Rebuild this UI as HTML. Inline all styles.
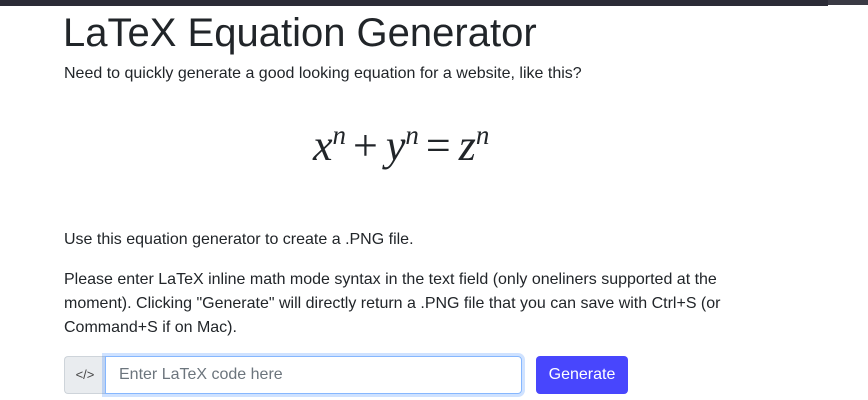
<!DOCTYPE html>
<html><head><style>
body{margin:0;width:868px;height:400px;overflow:hidden;background:#fff;font-family:"Liberation Sans",sans-serif;color:#212529;position:relative}
.bar{position:absolute;top:0;left:0;width:828px;height:6px;background:#2b2b36}
.bar2{position:absolute;top:0;left:828px;width:40px;height:5px;background:#3a3a44}
h1{position:absolute;left:63px;top:9px;margin:0;font-weight:400;font-size:40px;line-height:48px}
p{position:absolute;left:64px;margin:0;font-size:16px;line-height:24px;width:680px}
.eq{position:absolute;left:313px;top:121px;font-family:"Liberation Serif",serif;font-size:44px;line-height:50px;white-space:nowrap}
.eq i sup{font-size:27px;vertical-align:16px;line-height:0}
.eq b{font-weight:400;margin:0 8px 0 7px}
.addon{position:absolute;left:64px;top:356px;width:40px;height:36px;border:1px solid #ced4da;border-right:none;background:#e9ecef;border-radius:4px 0 0 4px;font-size:13px;text-align:center;line-height:36px;color:#444}
.inp{position:absolute;left:105px;top:356px;width:402px;height:36px;border:1px solid #86b7fe;border-radius:0 4px 4px 0;box-shadow:0 0 0 3px rgba(13,110,253,.2);padding-left:13px;font-size:16px;line-height:36px;color:#6c757d}
.btn{position:absolute;left:536px;top:356px;width:92px;height:38px;background:#4846fd;border-radius:4px;color:#fff;font-size:16px;line-height:38px;text-align:center}
</style></head><body>
<div class="bar"></div><div class="bar2"></div>
<h1>LaTeX Equation Generator</h1>
<p style="top:62px">Need to quickly generate a good looking equation for a website, like this?</p>
<div class="eq"><i>x<sup>n</sup></i><b>+</b><i>y<sup>n</sup></i><b>=</b><i>z<sup>n</sup></i></div>
<p style="top:228px">Use this equation generator to create a .PNG file.</p>
<p style="top:268px">Please enter LaTeX inline math mode syntax in the text field (only oneliners supported at the moment). Clicking "Generate" will directly return a .PNG file that you can save with Ctrl+S (or Command+S if on Mac).</p>
<div class="addon">&lt;/&gt;</div>
<div class="inp">Enter LaTeX code here</div>
<div class="btn">Generate</div>
</body></html>
